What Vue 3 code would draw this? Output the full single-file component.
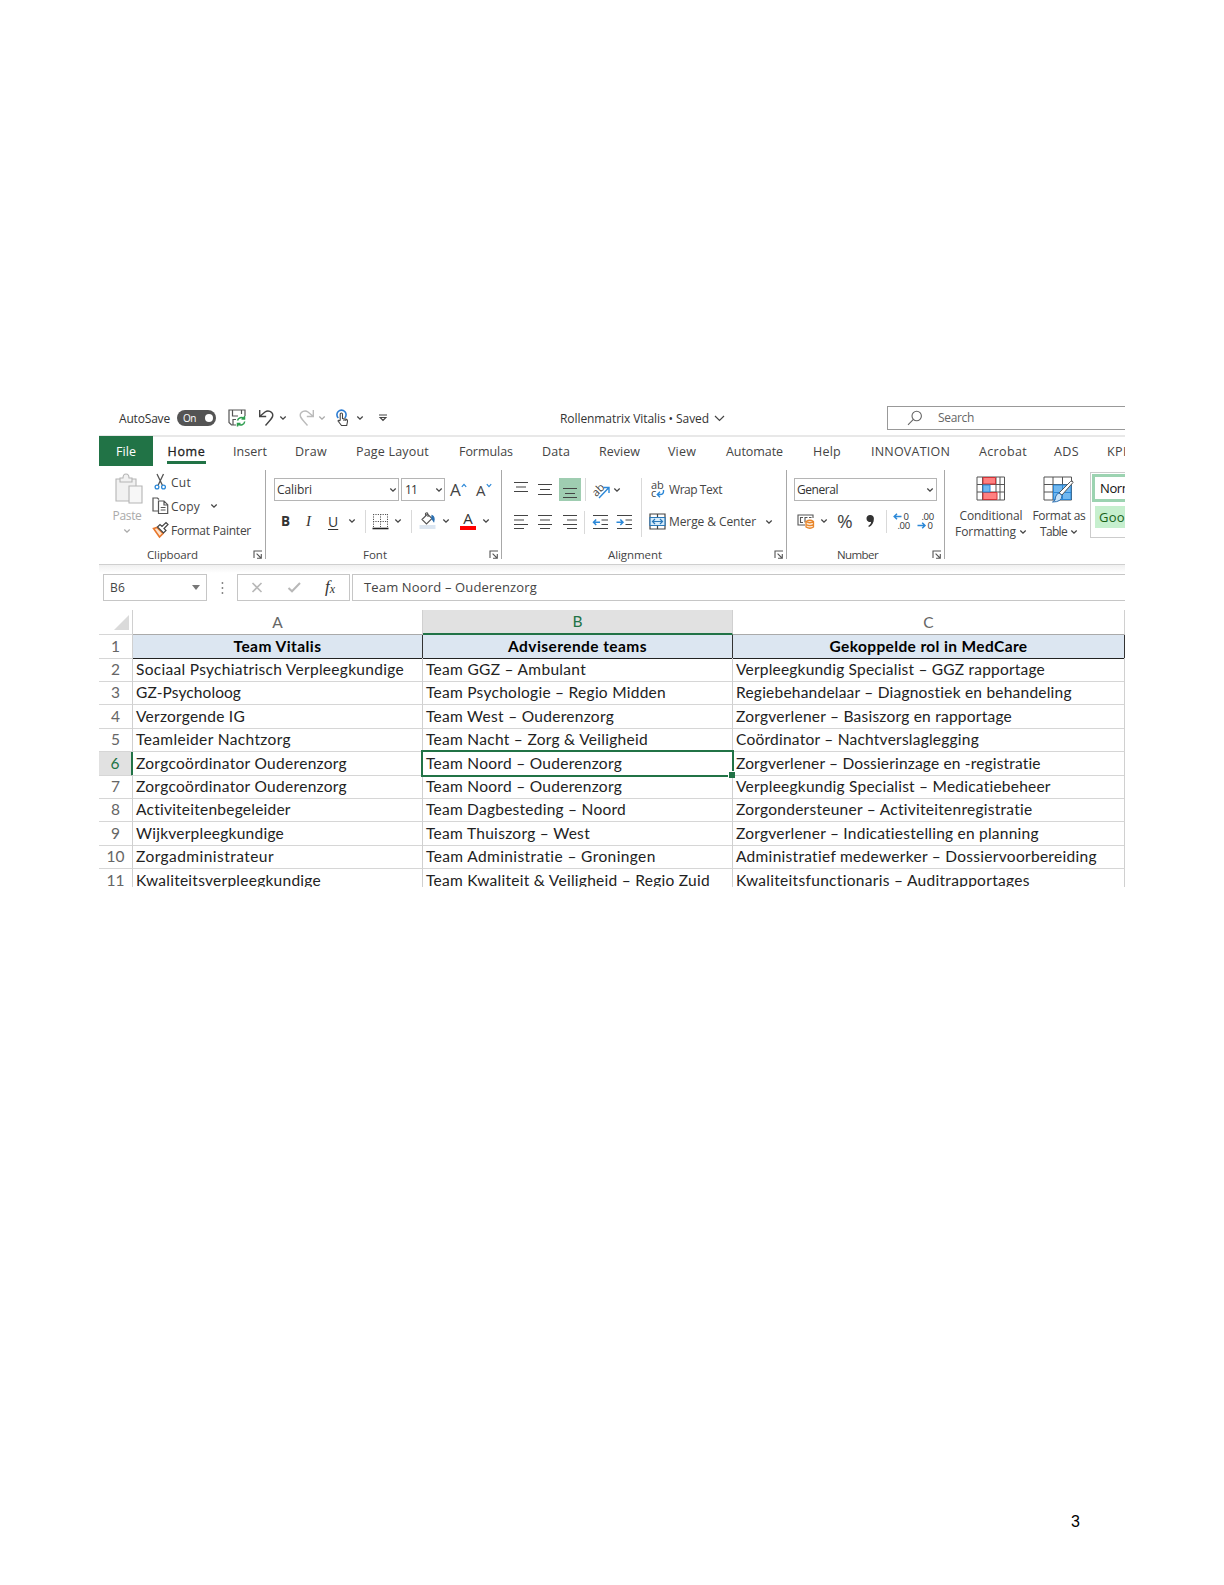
<script setup>
import { h } from 'vue'

// Spreads the letters of a label so that it takes up the given width.
const vFit = {
  mounted(el, { value }) {
    const natural = el.getBoundingClientRect().width
    el.style.letterSpacing = `${(value - natural) / el.textContent.length}px`
  },
}

const Chev = () =>
  h('svg', { class: 'chev', width: 8, height: 6, viewBox: '0 0 8 6' }, [
    h('path', { d: 'M1.3 1.5 4 4.1 6.7 1.5', fill: 'none', stroke: 'currentColor', 'stroke-width': 1.3 }),
  ])

const Launcher = () =>
  h('svg', { class: 'launcher', width: 10, height: 10, viewBox: '0 0 10 10' }, [
    h('path', { d: 'M1 8V1H9M3.6 3.6 8 8M8.3 4V8.3H4', fill: 'none', stroke: '#555', 'stroke-width': 1.1 }),
  ])

const tabs = [
  { name: 'Insert', lead: 27, w: 34 },
  { name: 'Draw', lead: 28, w: 32 },
  { name: 'Page Layout', lead: 29, w: 73 },
  { name: 'Formulas', lead: 30, w: 54 },
  { name: 'Data', lead: 29, w: 28 },
  { name: 'Review', lead: 29, w: 41 },
  { name: 'View', lead: 28, w: 28 },
  { name: 'Automate', lead: 30, w: 57 },
  { name: 'Help', lead: 30, w: 28 },
  { name: 'INNOVATION', lead: 30, w: 79 },
  { name: 'Acrobat', lead: 29, w: 48 },
  { name: 'ADS', lead: 27, w: 25 },
  { name: 'KPI', lead: 28, w: 20 },
]

const head = [
  ['Team Vitalis', 88],
  ['Adviserende teams', 139],
  ['Gekoppelde rol in MedCare', 198],
]

const rows = [
  [['Sociaal Psychiatrisch Verpleegkundige', 268], ['Team GGZ – Ambulant', 160], ['Verpleegkundig Specialist – GGZ rapportage', 309]],
  [['GZ-Psycholoog', 105], ['Team Psychologie – Regio Midden', 240], ['Regiebehandelaar – Diagnostiek en behandeling', 336]],
  [['Verzorgende IG', 109], ['Team West – Ouderenzorg', 188], ['Zorgverlener – Basiszorg en rapportage', 276]],
  [['Teamleider Nachtzorg', 155], ['Team Nacht – Zorg & Veiligheid', 222], ['Coördinator – Nachtverslaglegging', 243]],
  [['Zorgcoördinator Ouderenzorg', 211], ['Team Noord – Ouderenzorg', 196], ['Zorgverlener – Dossierinzage en -registratie', 305]],
  [['Zorgcoördinator Ouderenzorg', 211], ['Team Noord – Ouderenzorg', 196], ['Verpleegkundig Specialist – Medicatiebeheer', 315]],
  [['Activiteitenbegeleider', 155], ['Team Dagbesteding – Noord', 200], ['Zorgondersteuner – Activiteitenregistratie', 297]],
  [['Wijkverpleegkundige', 148], ['Team Thuiszorg – West', 164], ['Zorgverlener – Indicatiestelling en planning', 303]],
  [['Zorgadministrateur', 138], ['Team Administratie – Groningen', 230], ['Administratief medewerker – Dossiervoorbereiding', 361]],
  [['Kwaliteitsverpleegkundige', 185], ['Team Kwaliteit & Veiligheid – Regio Zuid', 284], ['Kwaliteitsfunctionaris – Auditrapportages', 294]],
]
</script>

<template>
  <main class="page">
    <section class="excel">
      <header class="titlebar">
        <span v-fit="51" class="autosave">AutoSave</span>
        <span class="toggle"><span v-fit="13">On</span><i></i></span>
        <svg width="18" height="18" viewBox="0 0 18 18" fill="none" stroke="#555" stroke-width="1.2">
          <path d="M8 16H3.5L1 13.500V1H17V7M4.500 1V7H10M13.500 1V5M5 16V10.500H8" />
          <path d="M9.500 11.500A4 4 0 0 1 16 9.500M16.500 7V10H13.500M16.700 12.500A4 4 0 0 1 10 15M9.500 17.500V14.500H12.500" stroke="#2f9e50" stroke-width="1.500" />
        </svg>
        <svg width="18" height="18" viewBox="0 0 18 18" fill="none" stroke="#444" stroke-width="1.4">
          <path d="M1.700 1V7.500H8.200M1.900 7.300 7 3C10 .8 14.500 2.500 14.800 6 15 8.300 13.500 10 7.500 16.500" />
        </svg>
        <Chev />
        <svg width="18" height="18" viewBox="0 0 18 18" fill="none" stroke="#bbb" stroke-width="1.4">
          <path d="M15.300 1V7.500H8.800M15.100 7.300 10 3C7 .8 2.500 2.500 2.200 6 2 8.300 3.500 10 9.500 16.500" />
        </svg>
        <Chev class="pale" />
        <svg width="16" height="18" viewBox="0 0 16 18" fill="none" stroke="#444" stroke-width="1.1">
          <path d="M3.300 9A4.600 4.600 0 1 1 9.700 9" stroke="#2b7cd3" stroke-width="1.600" />
          <path d="M5.200 11.500V5.300C5.200 3.600 7.500 3.600 7.500 5.300V9.500L11.500 10.300Q12.800 10.700 12.500 12.500L11.700 16.500H6.500L3 12Q3.500 10.500 5.200 12M9 9.800V12M10.800 10.200V12" fill="#fff" />
        </svg>
        <Chev />
        <svg width="10" height="8" viewBox="0 0 10 8" fill="none" stroke="#444" stroke-width="1.2"><path d="M1 1H9M2.200 3.500 5 6.300 7.800 3.500Z" /></svg>
        <span v-fit="149" class="docname">Rollenmatrix Vitalis • Saved</span>
        <svg width="11" height="7" viewBox="0 0 11 7" fill="none" stroke="#444" stroke-width="1.2"><path d="M1 1 5.500 5.500 10 1" /></svg>
        <div class="search">
          <svg width="16" height="16" viewBox="0 0 16 16" fill="none" stroke="#666" stroke-width="1.1"><circle cx="9.700" cy="6" r="4.700" /><path d="M6.400 9.400 1 14.800" /></svg>
          <span v-fit="36">Search</span>
        </div>
      </header>

      <nav class="tabs">
        <div class="file"><span v-fit="20">File</span></div>
        <div class="home"><span v-fit="38">Home</span></div>
        <span v-for="t in tabs" :key="t.name" class="tab" :style="{ marginLeft: t.lead + 'px', width: t.w + 'px' }"><span v-fit="t.w">{{ t.name }}</span></span>
      </nav>

      <div class="ribbon">
        <div class="group clipboard">
          <div class="clip-body">
            <div class="paste">
              <svg width="32" height="32" viewBox="0 0 32 32" fill="#f1f1f1" stroke="#b5b5b5" stroke-width="1.1">
                <path d="M2 6H22V28H2Z" /><path d="M6 9V5H9Q9 1 12 1T15 5H18V9Z" /><path d="M15 13H28V30H15Z" fill="#f7f7f7" />
              </svg>
              <span v-fit="29">Paste</span>
              <Chev />
            </div>
            <div class="clip-list">
              <div>
                <svg width="17" height="18" viewBox="0 0 17 18" fill="none" stroke="#555" stroke-width="1.3">
                  <path d="M5 1 10.500 12.500M11.500 1 6 12.500" /><circle cx="5" cy="14" r="1.900" stroke="#2b88d8" /><circle cx="11.500" cy="14" r="1.900" stroke="#2b88d8" />
                </svg>
                <span v-fit="20">Cut</span>
              </div>
              <div>
                <svg width="17" height="18" viewBox="0 0 17 18" fill="none" stroke="#555" stroke-width="1.2">
                  <path d="M6 14H1V1H5.500L7 2.500" /><path d="M6.500 4H12L15.700 7.700V16.500H6.500ZM12 4V8H15.700M8.700 10.500H13.500M8.700 13H13.500" />
                </svg>
                <span v-fit="29">Copy</span><Chev />
              </div>
              <div>
                <svg width="17" height="18" viewBox="0 0 17 18" fill="none" stroke="#444" stroke-width="1.2">
                  <path d="M1.500 7.500 5 6.500 11 12.500 7.500 16Z" fill="#fce3cc" stroke="#e8762b" stroke-width="1.600" />
                  <path d="M5.500 6 8 3.500 10 5.500 14 1.500 16 3.500 12 7.500 14 9.500 11.500 12Z" fill="#fff" />
                </svg>
                <span v-fit="80">Format Painter</span>
              </div>
            </div>
          </div>
          <div class="label"><span v-fit="51">Clipboard</span><Launcher /></div>
        </div>

        <div class="group font">
          <div class="line font-top">
            <div class="combo"><span v-fit="35">Calibri</span><Chev /></div>
            <div class="combo size"><span v-fit="12">11</span><Chev /></div>
            <span class="grow">A<svg width="6" height="5" viewBox="0 0 6 5"><path d="M.8 3.800 3 1.300 5.200 3.800" fill="none" stroke="#2b88d8" stroke-width="1.200" /></svg></span>
            <span class="grow shrink">A<svg width="6" height="5" viewBox="0 0 6 5"><path d="M.8 1.200 3 3.700 5.200 1.200" fill="none" stroke="#2b88d8" stroke-width="1.200" /></svg></span>
          </div>
          <div class="line font-bottom">
            <b>B</b><em>I</em><u>U</u><Chev /><i class="bar"></i>
            <svg width="17" height="17" viewBox="0 0 17 17" fill="none" stroke="#555"><path d="M1.500 1V14M15.500 1V14M8.500 1V14M1 1.500H16M1 8.500H16" stroke-dasharray="1.200 1.200" /><path d="M.5 15.500H16.500" stroke="#222" stroke-width="1.600" /></svg>
            <Chev /><i class="bar"></i>
            <svg width="17" height="18" viewBox="0 0 17 18" fill="none" stroke="#555" stroke-width="1.100"><path d="M3 7.500 8.500 2 13 6.500 7.500 12ZM6.500 4V1.500Q8.500-.5 9 2.500V5" /><path d="M13 3.500Q16 5 14.800 9.500L12.800 6.500Z" fill="#2b6fb0" stroke="#2b6fb0" /><path d="M.5 13H16.500V17H.5Z" fill="#dce6f1" stroke="none" /></svg>
            <Chev />
            <span class="fontcolor">A</span><Chev />
          </div>
          <div class="label"><span v-fit="24">Font</span><Launcher /></div>
        </div>

        <div class="group align">
          <div class="align-body">
            <div class="align-left">
              <div class="line align-top">
                <svg width="16" height="16" viewBox="0 0 16 16" class="rules"><path d="M1 0.500H15M3 5H13M1 9.500H15" /></svg>
                <svg width="16" height="16" viewBox="0 0 16 16" class="rules"><path d="M1 2.500H15M3 7.500H13M1 12.500H15" /></svg>
                <span class="picked"><svg width="16" height="16" viewBox="0 0 16 16" class="rules"><path d="M1 6.500H15M3 11.500H13M1 15.500H15" /></svg></span>
                <i class="bar"></i>
                <svg width="20" height="20" viewBox="0 0 20 20"><text x="-1" y="13.500" transform="rotate(-45 6 9)" font-size="11" fill="#444">ab</text><path d="M7 18 16.500 8M11.500 7.500H17V13" fill="none" stroke="#2b88d8" stroke-width="1.400" /></svg>
                <Chev />
              </div>
              <div class="line align-bottom">
                <svg width="16" height="16" viewBox="0 0 16 16" class="rules"><path d="M1 1.500H15M1 6H11M1 10.500H15M1 14.500H11" /></svg>
                <svg width="16" height="16" viewBox="0 0 16 16" class="rules"><path d="M1 1.500H15M3 6H13M1 10.500H15M3 14.500H13" /></svg>
                <svg width="16" height="16" viewBox="0 0 16 16" class="rules"><path d="M1 1.500H15M5 6H15M1 10.500H15M5 14.500H15" /></svg>
                <i class="bar"></i>
                <svg width="17" height="16" viewBox="0 0 17 16" class="rules"><path d="M1 1.500H16M9.500 6H16M9.500 10.500H16M1 14.500H16" /><path d="M1.500 8.200H8M4.200 5.500 1.500 8.200 4.200 11" class="blue" /></svg>
                <svg width="17" height="16" viewBox="0 0 17 16" class="rules"><path d="M1 1.500H16M9.500 6H16M9.500 10.500H16M1 14.500H16" /><path d="M.5 8.200H7M4.300 5.500 7 8.200 4.300 11" class="blue" /></svg>
              </div>
            </div>
            <div class="align-right">
              <div class="line">
                <svg width="17" height="18" viewBox="0 0 17 18"><text x="2" y="8" font-size="11" fill="#444">ab</text><text x="2" y="16" font-size="11" fill="#444">c</text><path d="M14.500 9V10.500Q14.500 13.500 11 13.500H8.500M11 10.800 8.300 13.500 11 16.200" fill="none" stroke="#2b88d8" stroke-width="1.400" /></svg>
                <span v-fit="53">Wrap Text</span>
              </div>
              <div class="line">
                <svg width="17" height="17" viewBox="0 0 17 17" fill="none" stroke="#444" stroke-width="1.200"><path d="M1 1H16V16H1ZM8.500 1V4M8.500 13V16" /><path d="M1 4.500H16V12.500H1Z" fill="#d6ebfa" stroke="#2b78b8" /><path d="M3.500 8.500H13.500M6 6 3.500 8.500 6 11M11 6 13.500 8.500 11 11" stroke="#2b78b8" /></svg>
                <span v-fit="87">Merge &amp; Center</span><Chev />
              </div>
            </div>
          </div>
          <div class="label"><span v-fit="54">Alignment</span><Launcher /></div>
        </div>

        <div class="group number">
          <div class="line"><div class="combo format"><span v-fit="41">General</span><Chev /></div></div>
          <div class="line number-bottom">
            <svg width="18" height="17" viewBox="0 0 18 17" fill="none" stroke="#555" stroke-width="1.100"><path d="M16 5V2H1V12H8M6 4.500H3.500V9.500H6M10.500 4.500H8V9.500M12 4.500H14.500" /><path d="M9 8.500V14Q13 16.500 16.500 14V8.500Q13 6 9 8.500Q13 11 16.500 8.500M9 11.500Q13 13.800 16.500 11.500" fill="#fdebd8" stroke="#e8862b" stroke-width="1.300" /></svg>
            <Chev />
            <span class="percent">%</span>
            <svg width="9" height="14" viewBox="0 0 9 14"><path d="M4.300 1A3.500 3.500 0 0 1 7.900 4.700C7.900 8.500 6 11.500 3 13L2.200 12C4.200 10.700 5 9.500 5.100 7.800A3.500 3.500 0 1 1 4.300 1Z" fill="#333" /></svg>
            <i class="bar"></i>
            <svg width="18" height="18" viewBox="0 0 18 18"><text x="10.500" y="8" class="digits">0</text><text x="4.500" y="17" class="digits">.00</text><path d="M1 4.500H8.500M4 1.700 1.200 4.500 4 7.300" class="blue" /></svg>
            <svg width="18" height="18" viewBox="0 0 18 18"><text x="4.500" y="8" class="digits">.00</text><text x="10.500" y="17" class="digits">0</text><path d="M.5 13.500H8M5.200 10.700 8 13.500 5.200 16.300" class="blue" /></svg>
          </div>
          <div class="label"><span v-fit="41">Number</span><Launcher /></div>
        </div>

        <div class="styles">
          <div class="big cond">
            <svg width="30" height="26" viewBox="0 0 30 26" fill="#fff" stroke="#555"><path d="M1 1H28.500V24H1ZM1 8.500H28.500M1 16H28.500M6.500 1V24M20 1V24M24 1V24" /><path d="M7 1.500H19.500V8H7ZM7 16.500H21V23.500H7Z" fill="#ff8080" stroke="#d13438" /><path d="M7 9H14V16H7Z" fill="#71b8f0" stroke="#2b88d8" /></svg>
            <span v-fit="63">Conditional</span>
            <span class="two"><span v-fit="61">Formatting</span><Chev /></span>
          </div>
          <div class="big tbl">
            <svg width="32" height="28" viewBox="0 0 32 28" fill="#fff" stroke="#555"><path d="M1 1H28.500V24H1ZM1 8.500H28.500M1 16H28.500M10 1V24M19.500 1V24" /><path d="M10.500 9H28V23.500H10.500Z" fill="#71b8f0" stroke="#2b88d8" /><path d="M10.500 16.500H28M19.500 9V23.500" stroke="#2b88d8" /><path d="M30 6.500 19 19 16 17 27.500 5.500Q30 4 30 6.500Z" /><path d="M16 17 19 19.500Q19 26 9.500 26Q13 24.500 12.500 21Q13.500 17.500 16 17Z" fill="#c7e2f8" stroke="#2b6fb0" /></svg>
            <span v-fit="53">Format as</span>
            <span class="two"><span v-fit="27">Table</span><Chev /></span>
          </div>
          <div class="gallery-col">
            <div class="gallery">
              <div class="normal"><span v-fit="43">Normal</span></div>
              <div class="good"><span v-fit="34">Good</span></div>
            </div>
            <div class="styles-label">Styles</div>
          </div>
        </div>
      </div>

      <div class="formula">
        <div class="box name"><span v-fit="15">B6</span><i></i></div>
        <svg width="3" height="12" viewBox="0 0 3 12" fill="#888"><path d="M.7 0H2.200V2H.7ZM.7 5H2.200V7H.7ZM.7 10H2.200V12H.7Z" /></svg>
        <div class="box tools">
          <svg width="12" height="11" viewBox="0 0 12 11" fill="none" stroke="#b8b8b8" stroke-width="1.600"><path d="M1.500 1 10.500 10M10.500 1 1.500 10" /></svg>
          <svg width="15" height="11" viewBox="0 0 15 11" fill="none" stroke="#b8b8b8" stroke-width="2"><path d="M1.500 6 5 9.300 13 1" /></svg>
          <span class="fx">f<sub>x</sub></span>
        </div>
        <div class="box value"><span v-fit="173">Team Noord – Ouderenzorg</span></div>
      </div>

      <div class="sheet">
        <div class="row letters">
          <div class="no corner"><svg width="15" height="15" viewBox="0 0 15 15"><path d="M15 0V15H0Z" fill="#dadada" /></svg></div>
          <div class="a">A</div><div class="b">B</div><div class="c">C</div>
        </div>
        <div class="row head">
          <div class="no">1</div>
          <div v-for="(c, i) in head" :key="i" :class="'abc'[i]"><span v-fit="c[1]">{{ c[0] }}</span></div>
        </div>
        <div v-for="(r, n) in rows" :key="n" class="row" :class="{ active: n === 4 }">
          <div class="no">{{ n + 2 }}</div>
          <div v-for="(c, i) in r" :key="i" :class="'abc'[i]"><span v-fit="c[1]">{{ c[0] }}</span></div>
        </div>
      </div>
    </section>
    <footer>3</footer>
  </main>
</template>

<style>
body { background: #fff; }
</style>

<style scoped>
.page { box-sizing: border-box; width: 1224px; height: 1585px; padding: 404px 99px 0; display: flex; flex-direction: column; font-family: "Open Sans", sans-serif; font-size: 12px; color: #444; background: #fff; }
.page * { box-sizing: border-box; }
svg { display: block; flex: none; overflow: visible; }
span { white-space: nowrap; flex: none; }
.excel { width: 1026px; height: 483px; overflow: hidden; display: flex; flex-direction: column; flex: none; }
.chev { color: #444; }
.pale { color: #aaa; }

.titlebar { height: 33px; padding: 1px 0 4px 20px; border-bottom: 2px solid #e8e8e8; display: grid; grid-template-columns: 58px 51px 30px 21px 19px 20px 17px 21px 22px 182px 154px 173px 238px; align-items: center; flex: none; color: #333; font-size: 12px; }
.toggle { width: 39px; height: 16px; border-radius: 8px; background: #545454; color: #fff; font-size: 10px; display: flex; align-items: center; padding-left: 6px; }
.toggle i { width: 8px; height: 8px; border-radius: 50%; background: #fff; margin-left: 9px; }
.titlebar > span { justify-self: start; }
.search { height: 24px; margin-top: -1px; border: 1px solid #999; border-right: 0; display: flex; align-items: center; padding-left: 19px; gap: 15px; color: #666; }

.tabs { height: 30px; display: flex; align-items: center; flex: none; margin-top: -1px; font-size: 12.5px; }
.file { width: 54px; height: 30px; background: #217346; color: #fff; display: flex; align-items: center; justify-content: center; flex: none; }
.home { margin-left: 14px; width: 39px; height: 27px; margin-top: -1px; border-bottom: 3px solid #217346; padding-top: 4px; display: flex; justify-content: center; align-items: center; color: #222; -webkit-text-stroke: .3px #222; flex: none; }
.tab { flex: none; }

.ribbon { height: 99px; border-bottom: 1px solid #cfcfcf; display: flex; flex: none; }
.group { height: 89px; margin-top: 4px; border-right: 1px solid #a8a8a8; display: flex; flex-direction: column; flex: none; }
.label { margin-top: auto; height: 9px; display: flex; align-items: center; line-height: 9px; font-size: 11.5px; }
.launcher { margin-left: auto; margin-right: 2px; }
.line { display: grid; align-items: center; justify-items: start; }
.bar { width: 1px; height: 23px; background: #d9d9d9; }

.clipboard { width: 167px; }
.clipboard .label { padding-left: 48px; }
.clip-body { display: flex; height: 74px; }
.paste { width: 52px; padding: 3px 0 0 4px; display: flex; flex-direction: column; align-items: center; color: #aaa; }
.paste svg:first-child { margin-left: 6px; }
.paste span { margin-top: 2px; line-height: 18px; }
.paste .chev { margin-top: 3px; color: #aaa; }
.clip-list { padding-left: 1px; }
.clip-list > div { height: 24px; display: grid; grid-template-columns: 19px 39px 8px; align-items: center; justify-items: start; }

.font { width: 236px; }
.font .label { padding-left: 97px; }
.font-top { margin-top: 8px; height: 23px; grid-template-columns: 127px 49px 26px 20px; padding-left: 8px; }
.combo { width: 125px; height: 23px; border: 1px solid #b5b5b5; padding: 0 1px 0 2px; display: flex; align-items: center; justify-content: space-between; color: #333; }
.combo.size { width: 44px; padding-left: 3px; }
.grow { display: flex; align-items: flex-start; font-size: 17px; line-height: 20px; }
.grow svg { margin-top: 3px; }
.shrink { font-size: 15px; }
.font-bottom { margin-top: 8px; height: 24px; padding-left: 15px; grid-template-columns: 24px 23px 20px 17px 7px 22px 17px 8px 23px 18px 22px 8px; font-size: 14px; color: #333; }
.font-bottom em { font-family: "Liberation Serif", serif; font-size: 15px; padding-left: 1px; }
.font-bottom b { font-size: 13.5px; }
.font-bottom u { text-underline-offset: 2px; }
.fontcolor { width: 16px; height: 18px; border-bottom: 4px solid #f00; font-size: 15px; line-height: 12px; text-align: center; }

.align { width: 285px; }
.align .label { padding-left: 106px; }
.align-body { display: flex; height: 74px; }
.align-left { width: 140px; height: 59px; margin-top: 8px; border-right: 1px solid #d9d9d9; }
.align-top { height: 23px; grid-template-columns: 24px 22px 26px 7px 21px 8px; padding-left: 11px; }
.picked { width: 22px; height: 23px; background: #9fcdb1; display: flex; align-items: center; justify-content: center; }
.align-bottom { margin-top: 9px; height: 24px; grid-template-columns: 24px 25px 22px 8px 24px 17px; padding-left: 11px; }
.rules { fill: none; stroke: #444; stroke-width: 1.2; }
.blue { fill: none; stroke: #2b88d8; stroke-width: 1.5; }
.align-right { padding: 8px 0 0 7px; }
.align-right .line { height: 23px; grid-template-columns: 20px 96px 8px; }
.align-right .line + .line { margin-top: 9px; }

.number { width: 158px; padding-top: 8px; }
.number .label { padding-left: 50px; }
.combo.format { width: 143px; margin-left: 7px; padding-right: 2px; }
.number-bottom { margin-top: 8px; height: 24px; padding-left: 10px; grid-template-columns: 23px 17px 29px 20px 7px 24px 18px; }
.percent { font-size: 19px; line-height: 24px; }
.digits { font-size: 9.500px; fill: #333; letter-spacing: -.4px; }

.styles { display: flex; flex: none; width: 181px; line-height: 16px; }
.big { display: flex; flex-direction: column; align-items: center; padding-top: 10px; }
.big > svg { margin-bottom: 6px; }
.cond { width: 72px; margin-left: 10px; flex: none; }
.tbl { width: 54px; margin-left: 5px; flex: none; }
.tbl > svg { margin-bottom: 4px; }
.two { display: flex; align-items: center; gap: 3px; }
.gallery-col { margin-left: 4px; width: 60px; flex: none; }
.gallery { margin-top: 6px; height: 66px; border: 1px solid #ccc; border-right: 0; padding: 1px; }
.normal { height: 28px; border: 3px solid #9cd3b1; border-right: 0; display: flex; align-items: center; padding-left: 5px; color: #111; font-size: 13px; }
.good { margin: 4px 0 0 3px; height: 22px; background: #c6efce; color: #176117; display: flex; align-items: center; padding-left: 4px; font-size: 13px; }
.styles-label { margin: 10px 0 0 35px; font-size: 11.5px; }

.formula { height: 45px; padding: 9px 0 9px 4px; background: linear-gradient(#f0f0f0, #fff 8px); display: flex; align-items: center; flex: none; }
.box { height: 27px; border: 1px solid #c6c6c6; display: flex; align-items: center; background: #fff; padding-bottom: 1px; }
.name { width: 104px; justify-content: space-between; padding: 0 6px 1px; margin-right: 14px; }
.name i { border: 4px solid transparent; border-top: 5px solid #777; border-bottom: 0; }
.tools { margin-left: 13px; width: 113px; padding-left: 13px; }
.tools svg + svg { margin-left: 24px; }
.fx { margin-left: 23px; font: italic 17px/20px "Liberation Serif", serif; color: #333; }
.fx sub { font-size: 12px; vertical-align: -1px; line-height: 0; }
.value { flex: 1; margin-left: 2px; border-right: 0; padding-left: 11px; font-size: 13px; }

.sheet { font-family: Lato, sans-serif; font-size: 15.500px; color: #222; }
.row { height: 23.400px; display: grid; grid-template-columns: 34px 290px 310px 392px; line-height: 23px; }
.row > div { border-bottom: 1px solid #d6d6d6; border-right: 1px solid #d0d0d0; padding-left: 3px; display: flex; align-items: center; min-width: 0; position: relative; }
.row > .no { padding: 0; justify-content: center; color: #666; }
.letters { height: 24.6px; }
.letters > div { justify-content: center; color: #666; border-bottom-color: #aaa; padding-left: 0; }
.letters > .b { background: #e1e1e1; color: #217346; border-bottom: 2px solid #217346; }
.letters > .corner { justify-content: flex-end; padding-right: 3px; border-bottom-color: #d6d6d6; }
.head > div:not(.no) { background: #dce6f1; border-bottom-color: #222; border-right-color: #333; justify-content: center; padding-left: 0; font-weight: 700; color: #000; }
.active > .no { background: #e1e1e1; color: #217346; border-right: 2px solid #217346; }
.active > .b::before { content: ""; position: absolute; inset: -2px -2px -2px -2px; border: 2px solid #217346; z-index: 1; }
.active > .b::after { content: ""; position: absolute; right: -3px; bottom: -3px; width: 6px; height: 6px; background: #217346; border: solid #fff; border-width: 1px 0 0 1px; z-index: 2; }

footer { margin-top: 625px; margin-left: 972px; font: 16px/20px "Liberation Sans", Arial, sans-serif; color: #000; }
</style>
